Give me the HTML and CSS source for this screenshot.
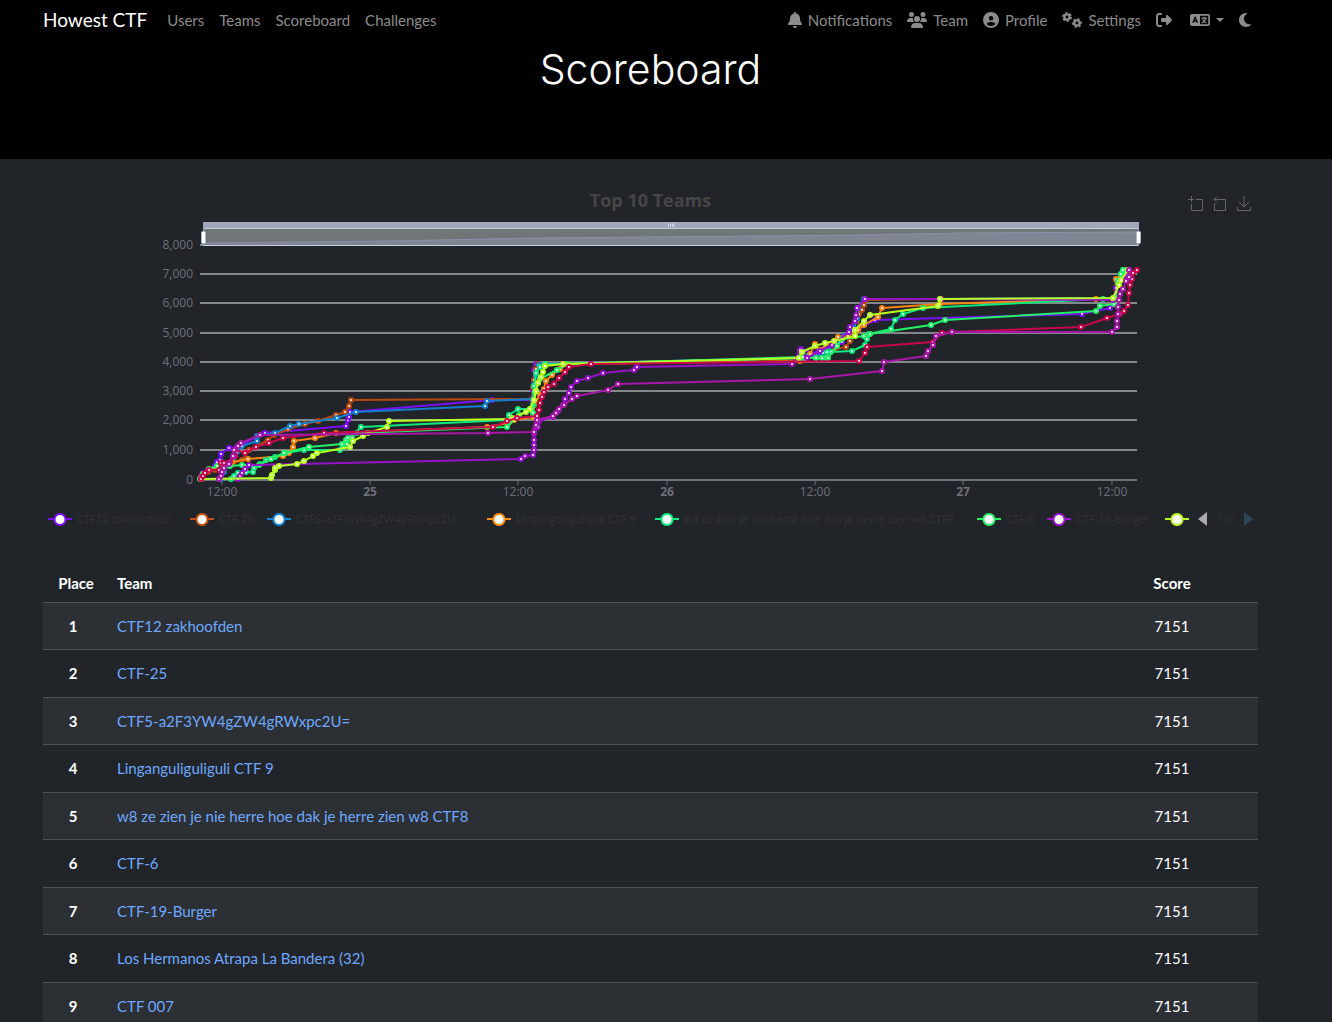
FILE: index.html
```html
<!DOCTYPE html>
<html lang="en">
<head>
<meta charset="utf-8">
<meta name="viewport" content="width=device-width, initial-scale=1">
<title>Howest CTF</title>
<link rel="stylesheet" href="styles.css">
</head>
<body>
<header class="masthead">
  <nav class="navbar container">
    <a class="brand" href="#">Howest CTF</a>
    <div class="links">
      <a href="#">Users</a>
      <a href="#">Teams</a>
      <a href="#">Scoreboard</a>
      <a href="#">Challenges</a>
    </div>
    <div class="links account">
      <a href="#"><svg class="icon" width="14" height="16" viewBox="0 0 448 512"><path d="M224 0c-17.700 0-32 14.300-32 32V51.200C119 66 64 130.600 64 208v18.800c0 47-17.300 92.400-48.500 127.600l-7.400 8.300c-8.400 9.400-10.400 22.900-5.300 34.400S19.400 416 32 416H416c12.600 0 24-7.400 29.200-18.900s3.100-25-5.300-34.400l-7.400-8.300C401.300 319.200 384 273.900 384 226.800V208c0-77.400-55-142-128-156.800V32c0-17.700-14.300-32-32-32zm45.300 493.300c12-12 18.700-28.300 18.700-45.300H160c0 17 6.700 33.300 18.700 45.300s28.300 18.700 45.300 18.700s33.300-6.700 45.300-18.700z"/></svg>Notifications</a>
      <a href="#"><svg class="icon" width="20" height="16" viewBox="0 0 640 512"><path d="M144 0a80 80 0 1 1 0 160A80 80 0 1 1 144 0zM512 0a80 80 0 1 1 0 160A80 80 0 1 1 512 0zM0 298.700C0 239.800 47.800 192 106.700 192h42.700c15.900 0 31 3.500 44.600 9.700c-1.300 7.200-1.900 14.700-1.900 22.300c0 38.200 16.800 72.500 43.300 96H21.300C9.600 320 0 310.400 0 298.700zM404.600 320c26.600-23.500 43.300-57.800 43.300-96c0-7.600-.7-15-1.900-22.300c13.600-6.300 28.700-9.700 44.600-9.700h42.700C592.200 192 640 239.800 640 298.700c0 11.800-9.600 21.300-21.300 21.300zM224 224a96 96 0 1 1 192 0 96 96 0 1 1-192 0zM128 485.300C128 411.700 187.700 352 261.300 352H378.700C452.300 352 512 411.700 512 485.300c0 14.700-11.900 26.700-26.700 26.700H154.700c-14.700 0-26.700-11.900-26.700-26.700z"/></svg>Team</a>
      <a href="#"><svg class="icon" width="16" height="16" viewBox="0 0 512 512"><path d="M399 384.200C376.900 345.800 335.400 320 288 320H224c-47.400 0-88.900 25.800-111 64.200c35.200 39.200 86.200 63.800 143 63.800s107.800-24.700 143-63.800zM0 256a256 256 0 1 1 512 0A256 256 0 1 1 0 256zm256 16a72 72 0 1 0 0-144 72 72 0 1 0 0 144z"/></svg>Profile</a>
      <a href="#"><svg class="icon" width="20" height="16" viewBox="0 0 640 512"><g fill="none" stroke="currentColor"><circle cx="160" cy="160" r="84" stroke-width="76"/><circle cx="160" cy="160" r="134" stroke-width="48" stroke-dasharray="76 64"/><circle cx="478" cy="352" r="84" stroke-width="76"/><circle cx="478" cy="352" r="134" stroke-width="48" stroke-dasharray="76 64" transform="rotate(30 478 352)"/></g></svg>Settings</a>
      <a href="#" aria-label="Logout"><svg class="icon" width="16" height="16" viewBox="0 0 512 512"><path d="M377.900 105.900L500.700 228.700c7.200 7.200 11.300 17.100 11.300 27.300s-4.100 20.100-11.300 27.300L377.900 406.100c-6.400 6.400-15 9.900-24 9.900c-18.700 0-33.900-15.200-33.900-33.900V320H192c-17.700 0-32-14.300-32-32v-64c0-17.700 14.300-32 32-32h128v-62.100c0-18.700 15.200-33.900 33.900-33.900c9 0 17.600 3.600 24 9.900zM160 96H96c-17.700 0-32 14.300-32 32v256c0 17.700 14.300 32 32 32h64c17.700 0 32 14.300 32 32s-14.300 32-32 32H96c-53 0-96-43-96-96V128C0 75 43 32 96 32h64c17.700 0 32 14.300 32 32s-14.300 32-32 32z"/></svg></a>
      <button class="nav-button" type="button" aria-label="Language"><svg class="icon" width="20" height="16" viewBox="0 0 640 512"><path fill-rule="evenodd" d="M64 64H576a64 64 0 0 1 64 64V384a64 64 0 0 1-64 64H64a64 64 0 0 1-64-64V128a64 64 0 0 1 64-64zM320 120V392H584V120z"/><path class="cut" d="M90 345L165 170L240 345M118 290H212"/><path class="glyph" d="M365 195H540M452 150V195M505 200C485 280 430 330 375 350M400 240C430 300 480 335 530 350"/></svg><svg class="caret" width="8" height="4" viewBox="0 0 8 4"><path d="M0 0H8L4 4z"/></svg></button>
      <button class="nav-button" type="button" aria-label="Theme"><svg class="icon" width="12" height="16" viewBox="0 0 384 512"><path d="M223.500 32C100 32 0 132.300 0 256S100 480 223.500 480c60.600 0 115.500-24.200 155.800-63.400c5-4.900 6.300-12.500 3.100-18.700s-10.100-9.700-17-8.500c-9.800 1.700-19.800 2.600-30.100 2.600c-96.900 0-175.500-78.800-175.500-176c0-65.800 36-123.100 89.300-153.300c6.100-3.500 9.200-10.500 7.700-17.300s-7.300-11.900-14.300-12.500c-6.300-.5-12.600-.8-19-.8z"/></svg></button>
    </div>
  </nav>
  <div class="container"><h1>Scoreboard</h1></div>
</header>

<main class="container">
  <section class="chart">
    <div class="chart-head">
      <h2>Top 10 Teams</h2>
      <div class="tools">
        <button type="button" aria-label="Zoom"><svg width="16" height="16" viewBox="0 0 16 16"><path d="M8 3.500H14.500V14.500H3.500V8M3.500 0V6M0 3.500H6"/></svg></button>
        <button type="button" aria-label="Zoom reset"><svg width="16" height="16" viewBox="0 0 16 16"><path d="M2 3.500H13.500V14.500H2.500V7M5 .5L2 3.500L5 6.500"/></svg></button>
        <button type="button" aria-label="Save as image"><svg width="16" height="16" viewBox="0 0 16 16"><path d="M1.500 11V14.500H14.500V11M8 0V11M2.500 5.500L8 11L13.500 5.500"/></svg></button>
      </div>
    </div>
    <svg class="plot" viewBox="43 218 1215 284" role="img" aria-label="Top 10 Teams">
      <g id="grid"></g>
      <g class="slider">
        <rect x="203" y="222" width="936" height="24" fill="#727578"/>
        <path d="M203 243L390 241L540 238L760 236L860 235L960 233L1139 232V246H203z" fill="#7f8692"/>
        <path d="M203 243L390 241L540 238L760 236L860 235L960 233L1139 232" fill="none" stroke="#8792ac"/>
        <rect x="203" y="222" width="936" height="6" fill="#a0a7b8"/>
        <path d="M203 228.500H1139M203 245.500H1139" stroke="#c7cee0"/>
        <path d="M203.500 222V246M1138.500 222V246" stroke="#a0a7b8"/>
        <path d="M668.500 223.500V227M670.500 223.500V227M672.500 223.500V227M674 223.500V227" stroke="#d5d9e2"/>
        <rect x="201.500" y="231.500" width="4" height="12" rx="1" fill="#fff" stroke="#acb8d1"/>
        <rect x="1136.500" y="231.500" width="4" height="12" rx="1" fill="#fff" stroke="#acb8d1"/>
      </g>
      <g id="series"></g>
    </svg>
    <div class="legend">
      <button type="button" class="c1"><i></i>CTF12 zakhoofden</button>
      <button type="button" class="c2"><i></i>CTF-25</button>
      <button type="button" class="c3"><i></i>CTF5-a2F3YW4gZW4gRWxpc2U=</button>
      <button type="button" class="c4"><i></i>Linganguliguliguli CTF 9</button>
      <button type="button" class="c5"><i></i>w8 ze zien je nie herre hoe dak je herre zien w8 CTF8</button>
      <button type="button" class="c6"><i></i>CTF-6</button>
      <button type="button" class="c7"><i></i>CTF-19-Burger</button>
      <button type="button" class="c8" aria-label="Los Hermanos Atrapa La Bandera (32)"><i></i></button>
      <div class="pager">
        <button type="button" aria-label="Previous"><svg width="9" height="14" viewBox="0 0 9 14"><path fill="#aaa" d="M9 0V14L0 7z"/></svg></button>
        <span>1/2</span>
        <button type="button" aria-label="Next"><svg width="9" height="14" viewBox="0 0 9 14"><path fill="#2f4554" d="M0 0V14L9 7z"/></svg></button>
      </div>
    </div>
  </section>

  <table class="scores">
    <thead><tr><th class="place">Place</th><th class="team">Team</th><th class="score">Score</th></tr></thead>
    <tbody>
      <tr><th>1</th><td class="team"><a href="#">CTF12 zakhoofden</a></td><td class="score">7151</td></tr>
      <tr><th>2</th><td class="team"><a href="#">CTF-25</a></td><td class="score">7151</td></tr>
      <tr><th>3</th><td class="team"><a href="#">CTF5-a2F3YW4gZW4gRWxpc2U=</a></td><td class="score">7151</td></tr>
      <tr><th>4</th><td class="team"><a href="#">Linganguliguliguli CTF 9</a></td><td class="score">7151</td></tr>
      <tr><th>5</th><td class="team"><a href="#">w8 ze zien je nie herre hoe dak je herre zien w8 CTF8</a></td><td class="score">7151</td></tr>
      <tr><th>6</th><td class="team"><a href="#">CTF-6</a></td><td class="score">7151</td></tr>
      <tr><th>7</th><td class="team"><a href="#">CTF-19-Burger</a></td><td class="score">7151</td></tr>
      <tr><th>8</th><td class="team"><a href="#">Los Hermanos Atrapa La Bandera (32)</a></td><td class="score">7151</td></tr>
      <tr><th>9</th><td class="team"><a href="#">CTF 007</a></td><td class="score">7151</td></tr>
    </tbody>
  </table>
</main>
<script src="chart.js"></script>
</body>
</html>
```
FILE: styles.css
```css
* { box-sizing: border-box; }

body {
  margin: 0;
  background: #212529;
  color: #fff;
  font: 15px/24px Lato, "Noto Sans", sans-serif;
}

a { text-decoration: none; }

button {
  padding: 0;
  border: 0;
  background: none;
  color: inherit;
  font: inherit;
  cursor: pointer;
}

.container { padding: 0 74px 0 43px; }

.masthead {
  height: 159px;
  background: #000;
}

.navbar {
  display: flex;
  align-items: center;
  height: 40px;
}

.brand {
  margin-right: 20px;
  color: #fff;
  font-size: 19px;
}

.links {
  display: flex;
  align-items: center;
  gap: 15px;
  color: #8c8c8c;
}

.links a { display: flex; align-items: center; gap: 6px; color: inherit; }

.account { margin-left: auto; padding-right: 7px; }

.icon { display: block; fill: currentColor; }
.icon .cut { fill: none; stroke: #000; stroke-width: 40; }
.icon .glyph { fill: none; stroke: currentColor; stroke-width: 36; }

.nav-button { display: flex; align-items: center; gap: 6px; }
.nav-button:first-of-type { margin-left: 3px; }
.caret { fill: currentColor; }

h1 {
  margin: 0;
  padding-top: 4px;
  font: 300 41px/50px Inter, Lato, sans-serif;
  text-align: center;
}

.chart {
  color: #6e7079;
  font: 12px/16px "Open Sans", "Noto Sans", sans-serif;
}

.chart-head {
  display: grid;
  grid-template-columns: 1fr auto 1fr;
  align-items: center;
  height: 59px;
  padding-top: 22px;
}

.chart-head h2 {
  grid-column: 2;
  margin: 0;
  color: #464646;
  font: bold 18px/24px "Open Sans", "Noto Sans", sans-serif;
}

.tools {
  display: flex;
  justify-content: flex-end;
  gap: 8px;
  padding: 8px 6px 0 0;
}

.tools svg { display: block; fill: none; stroke: #666; }

.plot { display: block; width: 100%; }
.plot text { fill: #6e7079; font-size: 12px; }
.plot .day { font-weight: bold; }

.legend {
  display: grid;
  grid-template-columns: 142fr 77fr 220fr 168fr 322fr 70fr 118fr 33fr 55fr;
  align-items: center;
  height: 34px;
  padding: 0 5px;
  color: #333;
  font-size: 11px;
}

.legend > button {
  display: flex;
  align-items: center;
  gap: 5px;
  text-align: left;
  white-space: nowrap;
}

.legend i {
  flex: none;
  width: 24px;
  height: 13px;
  background:
    radial-gradient(circle at center, #fff 0 4px, currentColor 5px 6px, transparent 7px),
    linear-gradient(transparent 5px, currentColor 5px 7px, transparent 7px);
}

.c1 i { color: #7a0ff5; }
.c2 i { color: #c24e12; }
.c3 i { color: #1484d4; }
.c4 i { color: #ff8d12; }
.c5 i { color: #0fec7c; }
.c6 i { color: #28f264; }
.c7 i { color: #9d14cf; }
.c8 i { color: #b8f522; }

.pager { display: flex; align-items: center; justify-content: space-between; }
.pager svg { display: block; }

.scores {
  width: 100%;
  margin-top: 29px;
  border-collapse: separate;
  border-spacing: 0;
  table-layout: fixed;
}

.scores th, .scores td {
  height: 47px;
  padding: 0;
  border-bottom: 1px solid #4d5154;
  text-align: center;
}

.scores thead th { height: 38px; padding-bottom: 2px; }
.scores tbody tr:nth-child(odd) { background: #2c3034; }
.scores tbody tr:nth-child(even) > * { height: 48px; padding-bottom: 1px; }
.scores .place { width: 60px; padding-left: 6px; }
.scores .team { padding-left: 14px; text-align: left; }
.scores .score { width: 172px; }
.scores a { color: #6ea8fe; }
```
FILE: chart.js
```javascript
const NS = "http://www.w3.org/2000/svg";

function add(parent, name, attrs, text) {
  const el = document.createElementNS(NS, name);
  for (const key in attrs) el.setAttribute(key, attrs[key]);
  if (text) el.textContent = text;
  parent.appendChild(el);
}

const grid = document.getElementById("grid");
const levels = [245, 274, 303, 333, 362, 391, 420, 450, 480];
levels.forEach((y, i) => {
  const value = (8 - i) * 1000;
  add(grid, "path", { d: `M200 ${y}H1137`, stroke: i === 8 ? "#6e7079" : "#85888b", "stroke-width": 2 });
  add(grid, "text", { x: 193, y: y + 4, "text-anchor": "end" }, value ? value.toLocaleString("en-US") : "0");
});

const ticks = [[222, "12:00"], [370, "25"], [518, "12:00"], [667, "26"], [815, "12:00"], [963, "27"], [1112, "12:00"]];
ticks.forEach(([x, label]) => {
  add(grid, "path", { d: `M${x} 480V485`, stroke: "#6e7079" });
  add(grid, "text", { x, y: 496, "text-anchor": "middle", class: label.length === 2 ? "day" : "" }, label);
});

const series = [
  ["#7a0ff5", "200,479 201,476 203,473 208,470 215,466 217,462 220,460 221,454 229,448 237,447 265,433 346,426 348,420 349,417 350,412 492,400 532,400 533,390 534,380 534,370 536,364 538,364 800,358 801,349 816,354 818,352 823,349 842,342 844,336 853,332 859,328 875,320 1082,314 1110,308 1113,300 1118,284 1124,273 1129,270"],
  ["#b8480f", "201,479 202,475 208,472 215,470 221,466 232,464 242,460 249,450 268,440 274,435 288,429 305,424 318,421 336,415 345,412 349,406 351,400 532,399 533,387 534,380 536,369 538,364 562,364 801,358 816,358 835,349 846,347 850,341 858,330 859,314 862,310 864,305 865,300 941,299 1114,299 1117,281 1121,275 1126,270"],
  ["#137fce", "221,479 224,472 230,464 233,460 237,452 242,446 257,441 257,436 275,433 290,426 299,424 337,418 356,412 485,406 487,401 533,399 534,385 536,375 539,365 800,358 800,352 815,357 823,353 835,345 845,336 854,328 857,319 858,308 864,299 940,299 1115,298 1120,281 1121,274 1126,270"],
  ["#f98510", "201,479 203,474 209,470 217,467 223,464 232,462 248,459 283,456 289,453 293,447 294,441 315,438 336,433 487,427 508,423 514,420 533,417 534,405 540,395 544,389 546,381 552,375 560,369 568,364 800,361 805,360 810,354 815,344 820,350 838,337 848,336 858,330 864,325 878,317 882,308 940,304 1096,299 1115,299 1116,279 1123,274 1127,270"],
  ["#0fe87b", "231,479 234,476 238,473 246,472 253,472 254,468 260,464 266,460 275,457 285,453 304,450 340,450 343,447 347,444 352,437 361,427 508,420 509,415 518,409 530,409 533,405 534,386 536,373 540,367 545,364 802,358 826,358 827,352 831,352 852,351 865,345 867,339 869,334 891,329 895,320 903,314 923,308 1103,299 1114,300 1118,281 1123,275 1124,270"],
  ["#22f266", "200,479 203,474 209,469 217,466 230,466 242,465 259,465 271,459 284,453 309,447 342,444 346,440 348,438 357,433 507,427 519,415 531,410 533,413 535,392 540,379 557,370 567,364 803,357 816,358 822,358 828,358 837,346 842,339 864,336 870,334 931,325 945,320 1096,311 1100,306 1114,304 1118,285 1121,274 1123,270"],
  ["#9612c8", "238,479 240,476 242,473 245,469 249,465 521,459 525,456 533,455 534,450 534,445 534,440 534,434 535,429 538,427 539,421 553,417 558,411 563,405 565,399 569,393 571,387 577,381 588,378 603,373 634,370 637,367 792,364 800,350 807,358 820,351 832,345 849,332 850,327 855,321 856,315 857,308 865,299 941,299 1113,300 1116,288 1121,280 1127,276 1129,270"],
  ["#b8ff22", "201,479 271,478 272,475 275,470 275,468 279,466 297,464 304,461 313,456 317,453 350,447 353,441 363,436 368,433 387,427 389,421 514,419 512,418 526,412 530,409 534,400 536,391 538,383 541,377 543,372 545,366 563,364 799,358 802,352 815,346 825,343 834,341 855,336 855,330 864,321 870,315 938,306 940,299 1113,298 1119,285 1121,280 1128,270"],
  ["#c8064c", "201,479 203,476 205,473 209,470 219,470 221,463 224,463 230,462 233,457 235,456 235,450 245,453 256,447 269,443 283,438 324,433 493,427 507,421 517,418 537,416 539,410 540,403 542,397 544,392 548,387 554,384 559,378 565,372 569,367 591,364 859,361 865,353 867,347 933,342 942,333 952,332 1081,327 1107,318 1120,314 1124,311 1128,305 1129,293 1130,285 1132,279 1133,273 1137,270"],
  ["#a818a8", "219,479 221,476 222,472 224,468 229,464 233,456 234,450 238,446 241,443 260,435 488,433 534,432 536,425 537,420 553,416 556,413 559,409 564,405 572,399 577,396 608,390 618,384 810,379 882,371 884,362 926,356 928,351 933,345 936,336 952,332 1112,332 1117,327 1117,321 1118,314 1118,307 1119,300 1120,294 1123,289 1126,281 1129,277 1129,270"]
];

const layer = document.getElementById("series");
series.forEach(([color, points]) => {
  add(layer, "polyline", { points, fill: "none", stroke: color, "stroke-width": 2, "stroke-linejoin": "bevel" });
  points.split(" ").forEach((pair) => {
    const [cx, cy] = pair.split(",");
    add(layer, "circle", { cx, cy, r: 2, fill: "#fff", stroke: color, "stroke-width": 2 });
  });
});
```
